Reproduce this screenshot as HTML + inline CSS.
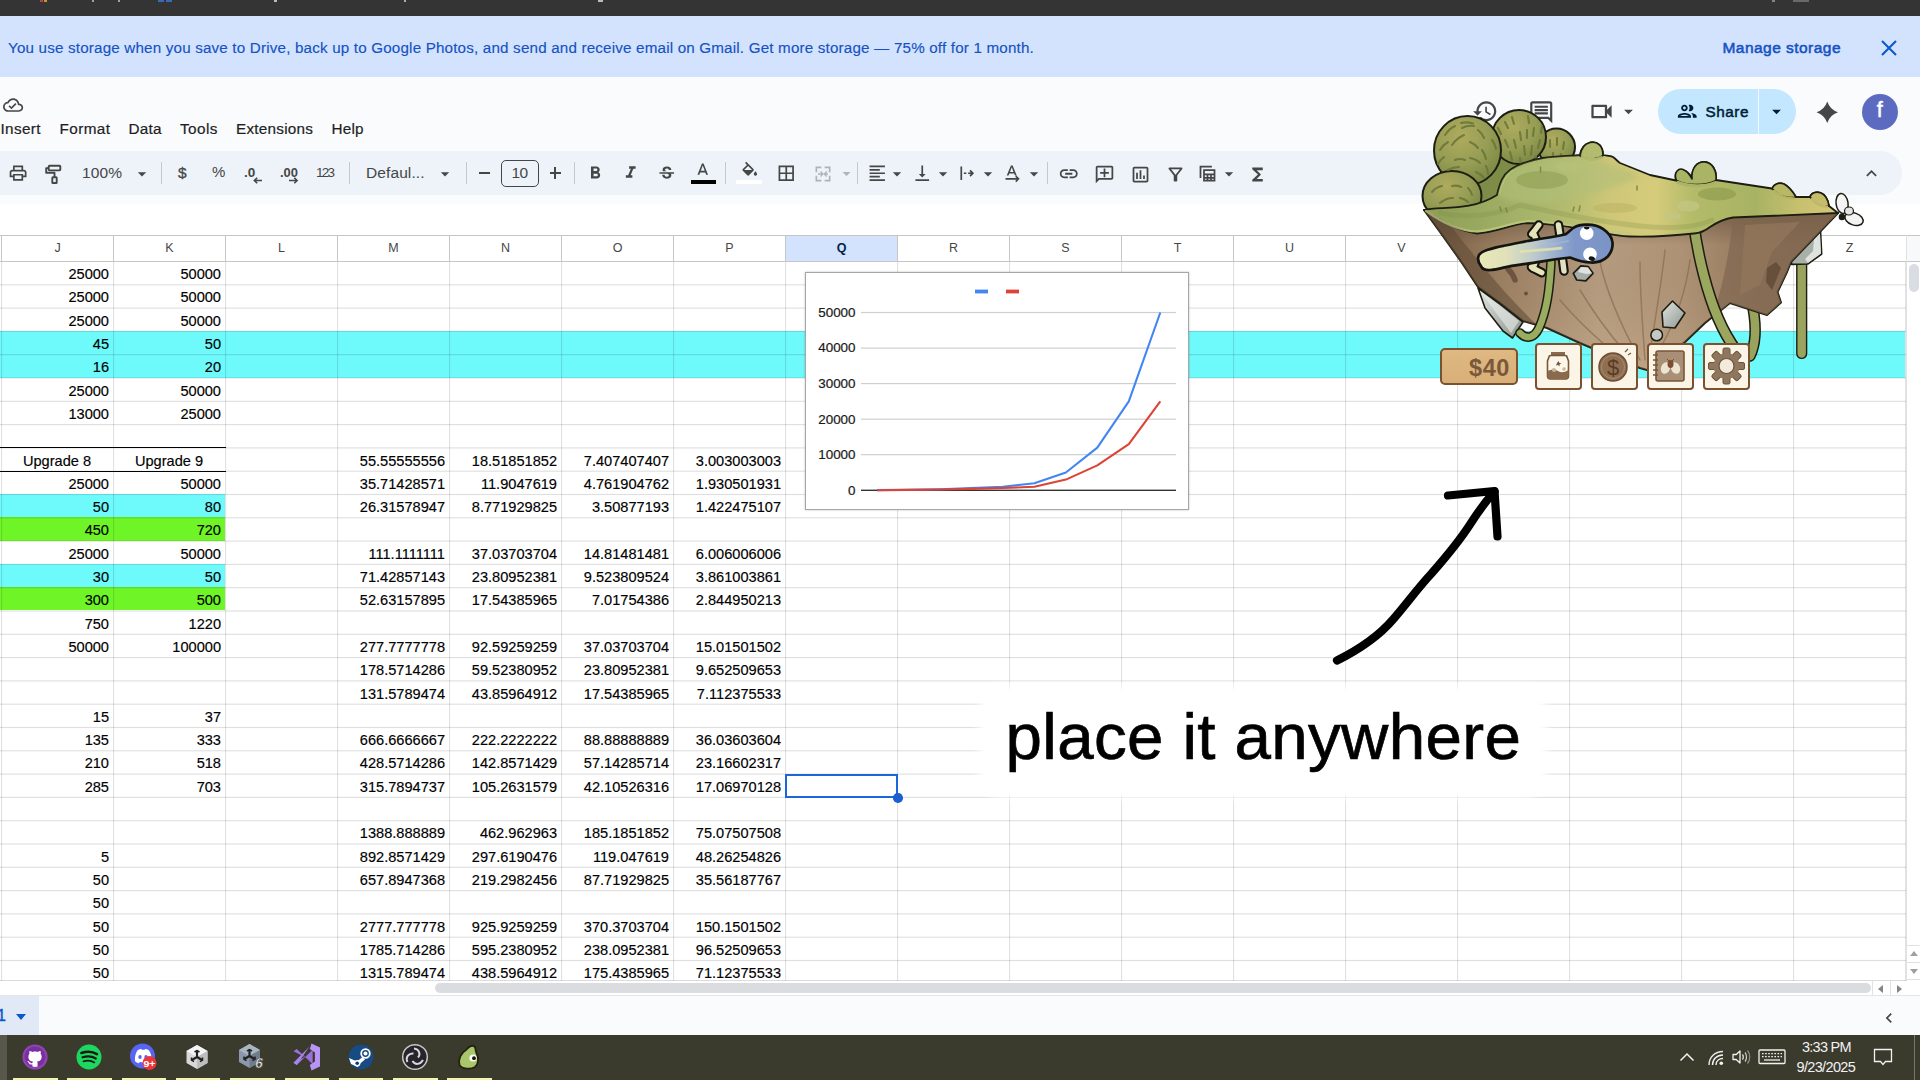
<!DOCTYPE html>
<html lang="en"><head><meta charset="utf-8"><title>Sheet</title>
<style>
*{box-sizing:border-box;margin:0;padding:0}
html,body{width:1920px;height:1080px;overflow:hidden;background:#fff}
body{font-family:"Liberation Sans",sans-serif;color:#000}
#root{position:relative;width:1920px;height:1080px;overflow:hidden;background:#fff}
#grid{position:absolute;left:0;top:0;width:1906px;height:981px;overflow:hidden}
.fl{position:absolute}
.hl{position:absolute;left:0;width:1906px;height:1px;background:rgba(0,0,0,.105)}
.vl{position:absolute;top:236px;height:745px;width:1px;background:rgba(0,0,0,.115);box-shadow:1px 0 0 rgba(0,0,0,.015)}
.hdr{position:absolute;left:0;top:235px;width:1906px;height:27px;background:#fff;border-top:1px solid #c4c7c5;border-bottom:1px solid #c4c7c5}
.hc{position:absolute;top:236px;height:25px;border-left:1px solid #c4c7c5;font-size:12.5px;color:#444746;text-align:center;line-height:25px}
.hc.sel{background:#d3e3fd;color:#041e49;font-weight:bold}
.c{position:absolute;height:24px;line-height:24px;font-size:14.600px;text-align:right;padding:0 4px 0 0;white-space:nowrap;-webkit-text-stroke:0.15px #000}
.c.ctr{text-align:center;padding:0}
.bl{position:absolute;height:1px;background:#000}
.selcell{position:absolute;border:2px solid #1b66dc;box-sizing:content-box;margin:-0px}
.selh{position:absolute;width:9.600px;height:9.600px;border-radius:50%;background:#1d5fd2}
#osbar{position:absolute;left:0;top:0;width:1920px;height:16px;background:#343434}
#banner{position:absolute;left:0;top:16px;width:1920px;height:61.500px;background:#d3e3fd;color:#0b57d0}
#apphead{position:absolute;left:0;top:77px;width:1920px;height:127px;background:#f9fbfd}
#toolbar{position:absolute;left:-30px;top:150.500px;width:1932px;height:44px;border-radius:22px;background:#eef2f9}
.t{position:absolute;white-space:nowrap;line-height:1}
.i{position:absolute;display:block;overflow:visible}
.sp{position:absolute;width:1px;background:#c7c7c7}
.mn{position:absolute;background:#444746}
.fsz{position:absolute;left:501px;top:159.500px;width:38px;height:27px;border:1.2px solid #444746;border-radius:5px}
#share{position:absolute;left:1658px;top:89px;width:138px;height:45px;border-radius:23px;background:#c2e7ff}
#share .sd{position:absolute;left:100px;top:0;width:1px;height:45px;background:rgba(255,255,255,.75)}
#avatar{position:absolute;left:1862px;top:93.500px;width:36px;height:36px;border-radius:50%;background:#5c6bc0}
#vsb{position:absolute;left:1906px;top:235px;width:14px;height:746px;background:#fff;border-left:1px solid #e1e1e1}
#vsb .th{position:absolute;left:2px;top:29px;width:9.500px;height:28px;border-radius:5px;background:#dadce3}
#vsb .ab{position:absolute;left:0;width:14px;height:18px;border-top:1px solid #e1e1e1;border-bottom:1px solid #e1e1e1}
#hsb{position:absolute;left:0;top:981px;width:1920px;height:14px;background:#fff}
#hsb .th{position:absolute;left:435px;top:2px;width:1436px;height:10px;border-radius:5px;background:#dadce0}
#hsb .vb{position:absolute;top:0;width:1px;height:14px;background:#e1e1e1}
#botbar{position:absolute;left:0;top:995px;width:1920px;height:40px;background:#f9fbfd;border-top:1px solid #e3e5e8}
#botbar .tab{position:absolute;left:0;top:0;width:39px;height:40px;background:#e1e9f7}
#taskbar{position:absolute;left:0;top:1035px;width:1920px;height:45px;background:#3a3a2d}
#taskbar .lstrip{position:absolute;left:0;top:0;width:7px;height:45px;background:#57574c}
#taskbar .rline{position:absolute;left:1914px;top:0;width:1px;height:45px;background:#77776a}
#taskbar .ul{position:absolute;top:42.500px;width:44.500px;height:3px;background:#f4f4ae}
#money{position:absolute;left:1440px;top:347.500px;width:78px;height:37.500px;background:linear-gradient(#dfb882,#d8af77);border:2.200px solid #7a5230;border-radius:5px}
#money span{position:absolute;right:6px;top:6px;font-size:23.500px;line-height:24px;font-weight:bold;color:#7a583b;letter-spacing:.6px}
.gb{position:absolute;top:343px;width:47px;height:46.500px;background:#fbf5e8;border:2.200px solid #7a5230;border-radius:4px;overflow:hidden}
.gb svg{position:absolute;left:-2.200px;top:-2.200px}
#chart{position:absolute;left:805px;top:272px;width:384px;height:238px;background:#fff;border:1px solid #a6a6a6;box-shadow:0 0 2px rgba(0,0,0,.25)}
#halo{position:absolute;left:990px;top:697px;width:546px;height:90px;background:#fff;border-radius:14px;box-shadow:0 0 10px 11px #fff}
#ptxt{position:absolute;left:1005.500px;top:704px;font-size:65.500px;line-height:1;letter-spacing:.35px;white-space:nowrap;color:#000;-webkit-text-stroke:.7px #000}

.speck{position:absolute;top:0;height:1.500px;display:block;opacity:.8}
#vsb .hcorner{position:absolute;left:0;top:0;width:14px;height:27px;background:#f8f9fa;border-top:1px solid #c4c7c5;border-bottom:1px solid #c4c7c5}

</style></head>
<body>
<div id="root">
<div id="osbar"><i class="speck" style="left:40px;width:3px;background:#d94a4a"></i><i class="speck" style="left:44px;width:3px;background:#e8b530"></i><i class="speck" style="left:92px;width:2px;background:#bbb"></i><i class="speck" style="left:118px;width:2px;background:#bbb"></i><i class="speck" style="left:158px;width:6px;background:#3b78d8"></i><i class="speck" style="left:166px;width:6px;background:#3b78d8"></i><i class="speck" style="left:274px;width:3px;background:#ddd"></i><i class="speck" style="left:404px;width:2px;background:#ccc"></i><i class="speck" style="left:598px;width:5px;background:#ddd"></i><i class="speck" style="left:1772px;width:3px;background:#999"></i><i class="speck" style="left:1793px;width:16px;background:#777"></i></div>
<div id="banner">
<span class="t" style="left:8.0px;top:23.9px;font-size:15.2px;letter-spacing:0.18px;color:#1552c4;-webkit-text-stroke:.15px #1552c4;">You use storage when you save to Drive, back up to Google Photos, and send and receive email on Gmail. Get more storage — 75% off for 1 month.</span>
<span class="t" style="left:1722.5px;top:23.7px;font-size:15.5px;letter-spacing:0.46px;color:#1552c4;-webkit-text-stroke:0.55px #1552c4;">Manage storage</span>
<svg class="i" style="left:1880px;top:22.500px" width="18" height="18" viewBox="0 0 18 18"><path d="M2 2 L16 16 M16 2 L2 16" stroke="#0b57d0" stroke-width="2.1" fill="none"/></svg>
</div>
<div id="apphead"></div>
<div id="toolbar"></div>
<svg class="i" style="left:2.9px;top:94.6px" width="20.2" height="20.2" viewBox="0 0 24 24"><path d="M19.350 10.040C18.670 6.590 15.640 4 12 4 9.110 4 6.600 5.640 5.350 8.040 2.340 8.360 0 10.910 0 14c0 3.310 2.690 6 6 6h13c2.760 0 5-2.240 5-5 0-2.640-2.050-4.780-4.650-4.960zM19 18H6c-2.210 0-4-1.790-4-4 0-2.050 1.530-3.760 3.560-3.970l1.070-.11.5-.95C8.080 7.140 9.940 6 12 6c2.620 0 4.880 1.860 5.390 4.430l.3 1.500 1.530.11c1.560.1 2.780 1.410 2.780 2.960 0 1.650-1.350 3-3 3zm-9-3.820l-2.090-2.090L6.500 13.500 10 17l6.010-6.010-1.410-1.410z" fill="#444746"/></svg>
<span class="t" style="left:0.5px;top:121.4px;font-size:15.3px;letter-spacing:0.35px;color:#1f1f1f;-webkit-text-stroke:.2px #1f1f1f;">Insert</span>
<span class="t" style="left:59.5px;top:121.4px;font-size:15.3px;letter-spacing:0.41px;color:#1f1f1f;-webkit-text-stroke:.2px #1f1f1f;">Format</span>
<span class="t" style="left:128.5px;top:121.4px;font-size:15.3px;letter-spacing:0.23px;color:#1f1f1f;-webkit-text-stroke:.2px #1f1f1f;">Data</span>
<span class="t" style="left:180.0px;top:121.4px;font-size:15.3px;letter-spacing:0.45px;color:#1f1f1f;-webkit-text-stroke:.2px #1f1f1f;">Tools</span>
<span class="t" style="left:236.0px;top:121.4px;font-size:15.3px;letter-spacing:0.24px;color:#1f1f1f;-webkit-text-stroke:.2px #1f1f1f;">Extensions</span>
<span class="t" style="left:331.5px;top:121.4px;font-size:15.3px;letter-spacing:0.18px;color:#1f1f1f;-webkit-text-stroke:.2px #1f1f1f;">Help</span>
<svg class="i" style="left:8.4px;top:163.4px" width="20.2" height="20.2" viewBox="0 0 24 24"><path d="M19 8h-1V3H6v5H5c-1.66 0-3 1.34-3 3v6h4v4h12v-4h4v-6c0-1.66-1.34-3-3-3zM8 5h8v3H8V5zm8 14H8v-4h8v4zm2-4v-2H6v2H4v-4c0-.55.45-1 1-1h14c.55 0 1 .45 1 1v4h-2z" fill="#444746"/></svg>
<svg class="i" style="left:40px;top:160px" width="28" height="28" viewBox="40 160 28 28"><g fill="none" stroke="#444746" stroke-width="1.900" stroke-linejoin="round"><rect x="48.700" y="165.800" width="11.600" height="4.600" rx="0.800"/><path d="M48.700 168.100h-2.500v4.700h8.300v4.500"/><rect x="52.300" y="177.300" width="4.400" height="5.700" rx="0.600"/></g></svg>
<span class="t" style="left:82.0px;top:165.2px;font-size:15.5px;letter-spacing:0.12px;color:#444746;">100%</span>
<svg class="i" style="left:131.7px;top:163.5px" width="20" height="20" viewBox="0 0 24 24"><path d="M7 10l5 5 5-5z" fill="#444746"/></svg>
<div class="sp" style="left:161px;top:162px;height:22px"></div>
<span class="t" style="left:178.0px;top:164.5px;font-size:15.5px;letter-spacing:0.38px;color:#444746;-webkit-text-stroke:0.3px #444746;">$</span>
<span class="t" style="left:212.0px;top:164.1px;font-size:15px;letter-spacing:-0.84px;color:#444746;">%</span>
<svg class="i" style="left:243px;top:163px" width="22" height="22" viewBox="0 0 22 22"><text x="1" y="14.2" font-family="Liberation Sans, sans-serif" font-size="13.5" font-weight="bold" fill="#444746">.0</text><path d="M19 17.500H11.500M14.200 14.700l-2.800 2.800 2.800 2.800" stroke="#444746" stroke-width="1.6" fill="none"/></svg>
<svg class="i" style="left:279px;top:163px" width="24" height="22" viewBox="0 0 24 22"><text x="1" y="14.200" font-family="Liberation Sans, sans-serif" font-size="13.5" font-weight="bold" fill="#444746" textLength="18" lengthAdjust="spacingAndGlyphs">.00</text><path d="M10 17.500H18M15.300 14.700l2.800 2.800-2.800 2.800" stroke="#444746" stroke-width="1.6" fill="none"/></svg>
<span class="t" style="left:316.0px;top:165.5px;font-size:13.5px;letter-spacing:-1.76px;color:#444746;">123</span>
<div class="sp" style="left:349px;top:162px;height:22px"></div>
<span class="t" style="left:366.0px;top:164.5px;font-size:15.5px;letter-spacing:0.10px;color:#444746;">Defaul...</span>
<svg class="i" style="left:434.7px;top:163.5px" width="20" height="20" viewBox="0 0 24 24"><path d="M7 10l5 5 5-5z" fill="#444746"/></svg>
<div class="sp" style="left:466px;top:162px;height:22px"></div>
<div class="mn" style="left:479px;top:172px;width:11px;height:2px"></div>
<div class="fsz"></div>
<span class="t" style="left:511.5px;top:164.7px;font-size:15.5px;letter-spacing:-0.74px;color:#444746;">10</span>
<div class="mn" style="left:549.500px;top:172px;width:11.5px;height:2px"></div><div class="mn" style="left:554.3px;top:167.200px;width:2px;height:11.5px"></div>
<div class="sp" style="left:574px;top:162px;height:22px"></div>
<svg class="i" style="left:585.2px;top:162.8px" width="20.5" height="20.5" viewBox="0 0 24 24"><path d="M15.6 10.79c.97-.67 1.65-1.77 1.65-2.79 0-2.26-1.75-4-4-4H7v14h7.04c2.09 0 3.71-1.7 3.71-3.79 0-1.52-.86-2.82-2.15-3.42zM10 6.5h3c.83 0 1.5.67 1.5 1.5s-.67 1.5-1.5 1.5h-3v-3zm3.5 9H10v-3h3.5c.83 0 1.5.67 1.5 1.5s-.67 1.5-1.5 1.5z" fill="#444746"/></svg>
<svg class="i" style="left:620.8px;top:163.2px" width="19.5" height="19.5" viewBox="0 0 24 24"><path d="M10 4v3h2.21l-3.42 8H6v3h8v-3h-2.21l3.42-8H18V4z" fill="#444746"/></svg>
<svg class="i" style="left:656.5px;top:163.8px" width="19.5" height="19.5" viewBox="0 0 24 24"><path d="M6.85 7.08C6.85 4.37 9.45 3 12.24 3c1.64 0 3 .49 3.9 1.28.77.65 1.46 1.73 1.46 3.24h-3.01c0-.31-.05-.59-.15-.85-.29-.86-1.2-1.28-2.25-1.28-1.86 0-2.34 1.02-2.34 1.7 0 .48.25.88.74 1.21.38.25.77.48 1.41.7H7.39c-.21-.34-.54-.89-.54-1.92zM21 12v-2H3v2h9.62c1.15.45 1.96.75 1.96 1.97 0 1-.81 1.67-2.28 1.67-1.54 0-2.93-.54-2.93-2.51H6.4c0 .55.08 1.13.24 1.58.81 2.29 3.29 3.3 5.67 3.3 2.27 0 5.3-.89 5.3-4.05 0-.3-.01-1.16-.48-1.94H21V12z" fill="#444746"/></svg>
<svg class="i" style="left:693.2px;top:160.8px" width="19.5" height="19.5" viewBox="0 0 24 24"><path d="M11 3L5.5 17h2.25l1.12-3h6.25l1.12 3h2.25L13 3h-2zm-1.38 9L12 5.67 14.38 12H9.62z" fill="#444746"/></svg>
<div class="mn" style="left:690.5px;top:179.5px;width:25.5px;height:4.500px;background:#000"></div>
<div class="sp" style="left:725px;top:162px;height:22px"></div>
<svg class="i" style="left:739.5px;top:160.8px" width="19.5" height="19.5" viewBox="0 -1 24 24"><path d="M16.56 8.94L7.62 0 6.21 1.41l2.38 2.38-5.15 5.15c-.59.59-.59 1.54 0 2.12l5.5 5.5c.29.29.68.44 1.06.44s.77-.15 1.06-.44l5.5-5.5c.59-.58.59-1.53 0-2.12zM5.21 10L10 5.21 14.79 10H5.21zM19 11.5s-2 2.17-2 3.5c0 1.1.9 2 2 2s2-.9 2-2c0-1.33-2-3.5-2-3.5z" fill="#444746"/></svg>
<div class="mn" style="left:736px;top:179.500px;width:26px;height:4.500px;background:#fff"></div>
<svg class="i" style="left:775.8px;top:163.2px" width="20.5" height="20.5" viewBox="0 0 24 24"><path d="M3 3v18h18V3H3zm8 16H5v-6h6v6zm0-8H5V5h6v6zm8 8h-6v-6h6v6zm0-8h-6V5h6v6z" fill="#444746"/></svg>
<svg class="i" style="left:812.7px;top:163.5px" width="20" height="20" viewBox="0 0 24 24"><path d="M3 3h7v2H5v5H3V3zm11 0h7v7h-2V5h-5V3zM3 14h2v5h5v2H3v-7zm16 0h2v7h-7v-2h5v-5zM6 11h4l-1.5-1.5 1-1L13 12l-3.500 3.500-1-1L10 13H6v-2zm12 0v2h-2.500l1.500 1.500-1 1L12.500 12 16 8.500l1 1L15.500 11H18z" fill="#b0b3b6"/></svg>
<svg class="i" style="left:836.7px;top:164.0px" width="19" height="19" viewBox="0 0 24 24"><path d="M7 10l5 5 5-5z" fill="#b0b3b6"/></svg>
<div class="sp" style="left:857px;top:162px;height:22px"></div>
<svg class="i" style="left:867.0px;top:163.2px" width="20.5" height="20.5" viewBox="0 0 24 24"><path d="M15 15H3v2h12v-2zm0-8H3v2h12V7zM3 13h18v-2H3v2zm0 8h18v-2H3v2zM3 3v2h18V3H3z" fill="#444746"/></svg>
<svg class="i" style="left:887.0px;top:163.5px" width="20" height="20" viewBox="0 0 24 24"><path d="M7 10l5 5 5-5z" fill="#444746"/></svg>
<svg class="i" style="left:912.2px;top:163.2px" width="20.5" height="20.5" viewBox="0 0 24 24"><path d="M16 13h-3V3h-2v10H8l4 4 4-4zM4 19v2h16v-2H4z" fill="#444746"/></svg>
<svg class="i" style="left:933.0px;top:163.5px" width="20" height="20" viewBox="0 0 24 24"><path d="M7 10l5 5 5-5z" fill="#444746"/></svg>
<svg class="i" style="left:956.8px;top:163.2px" width="20.5" height="20.5" viewBox="0 0 24 24"><path d="M4 4h2v16H4V4zm4 7h3v2H8v-2zm5 0h3.170l-1.590-1.590L16 8l4 4-4 4-1.410-1.410L16.170 13H13v-2z" fill="#444746"/></svg>
<svg class="i" style="left:978.0px;top:163.5px" width="20" height="20" viewBox="0 0 24 24"><path d="M7 10l5 5 5-5z" fill="#444746"/></svg>
<svg class="i" style="left:1003.0px;top:162.5px" width="20" height="20" viewBox="0 0 24 24"><path d="M9.500 3L4.500 15h2.100l1-2.500h5.800l1 2.500h2.100L11.500 3h-2zM8.350 10.700L10.500 5.200l2.150 5.500h-4.300zM3 18h13.200l-1.600-1.600L16 15l4 4-4 4-1.400-1.400 1.600-1.600H3v-2z" fill="#444746"/></svg>
<svg class="i" style="left:1023.7px;top:163.5px" width="20" height="20" viewBox="0 0 24 24"><path d="M7 10l5 5 5-5z" fill="#444746"/></svg>
<div class="sp" style="left:1047px;top:162px;height:22px"></div>
<svg class="i" style="left:1058.2px;top:163.2px" width="21.5" height="21.5" viewBox="0 0 24 24"><path d="M3.9 12c0-1.71 1.39-3.1 3.1-3.1h4V7H7c-2.76 0-5 2.24-5 5s2.24 5 5 5h4v-1.9H7c-1.71 0-3.1-1.39-3.1-3.1zM8 13h8v-2H8v2zm9-6h-4v1.9h4c1.71 0 3.1 1.39 3.1 3.1s-1.39 3.1-3.1 3.1h-4V17h4c2.76 0 5-2.24 5-5s-2.24-5-5-5z" fill="#444746"/></svg>
<svg class="i" style="left:1094.2px;top:163.5px" width="21" height="21" viewBox="0 0 24 24"><path d="M2 4c0-1.100.9-2 2-2h16c1.100 0 2 .9 2 2v12c0 1.100-.9 2-2 2H6l-4 4V4zm2 13.170L5.170 16H20V4H4v13.170zM11 5h2v4h4v2h-4v4h-2v-4H7V9h4z" fill="#444746"/></svg>
<svg class="i" style="left:1129.5px;top:163.5px" width="21" height="21" viewBox="0 0 24 24"><path d="M9 17H7v-7h2v7zm4 0h-2V7h2v10zm4 0h-2v-4h2v4zm2 2H5V5h14v14zm0-16H5c-1.100 0-2 .9-2 2v14c0 1.100.9 2 2 2h14c1.100 0 2-.9 2-2V5c0-1.100-.9-2-2-2z" fill="#444746"/></svg>
<svg class="i" style="left:1165.0px;top:163.5px" width="21" height="21" viewBox="0 0 24 24"><path d="M7 6h10l-5.010 6.300L7 6zm-2.750-.390C6.270 8.200 10 13 10 13v6c0 .55.45 1 1 1h2c.55 0 1-.45 1-1v-6s3.720-4.800 5.740-7.390c.51-.66.040-1.610-.79-1.610H5.040c-.83 0-1.300.95-.79 1.610z" fill="#444746"/></svg>
<svg class="i" style="left:1197.0px;top:163.0px" width="21" height="21" viewBox="0 0 24 24"><path d="M7 7h14v14H7V7zm2 2v3h10V9H9zm0 5v2h2v-2H9zm4 0v2h2v-2h-2zm4 0v2h2v-2h-2zm-8 4v1h2v-1H9zm4 0v1h2v-1h-2zm4 0v1h2v-1h-2zM3 3h14v2H5v12H3V3z" fill="#444746"/></svg>
<svg class="i" style="left:1219.0px;top:163.5px" width="20" height="20" viewBox="0 0 24 24"><path d="M7 10l5 5 5-5z" fill="#444746"/></svg>
<svg class="i" style="left:1247.0px;top:163.5px" width="21" height="21" viewBox="0 0 24 24"><path d="M18 4H6v2l6.500 6L6 18v2h12v-3h-7l5-5-5-5h7z" fill="#444746"/></svg>
<svg class="i" style="left:1860.5px;top:162.5px" width="21" height="21" viewBox="0 0 24 24"><path d="M7.410 15.410L12 10.830l4.590 4.580L18 14l-6-6-6 6z" fill="#444746"/></svg>
<svg class="i" style="left:1472.2px;top:97.8px" width="26.5" height="26.5" viewBox="0 0 24 24"><path d="M13 3c-4.970 0-9 4.030-9 9H1l3.890 3.890.07.14L9 12H6c0-3.870 3.130-7 7-7s7 3.130 7 7-3.130 7-7 7c-1.930 0-3.680-.79-4.940-2.060l-1.420 1.420C8.270 19.990 10.510 21 13 21c4.970 0 9-4.030 9-9s-4.030-9-9-9zm-1 5v5l4.280 2.540.72-1.210-3.500-2.080V8H12z" fill="#444746"/></svg>
<svg class="i" style="left:1527.8px;top:98.8px" width="26.5" height="26.5" viewBox="0 0 24 24"><path d="M21.990 4c0-1.100-.89-2-1.990-2H4c-1.100 0-2 .9-2 2v12c0 1.100.9 2 2 2h14l4 4-.01-18zM20 4v13.170L18.830 16H4V4h16zM6 12h12v2H6zm0-3h12v2H6zm0-3h12v2H6z" fill="#444746"/></svg>
<svg class="i" style="left:1588.0px;top:98.0px" width="27" height="27" viewBox="0 0 24 24"><path d="M15 8v8H5V8h10m1-2H4c-.55 0-1 .45-1 1v10c0 .55.45 1 1 1h12c.55 0 1-.45 1-1v-3.500l4 4v-11l-4 4V7c0-.55-.45-1-1-1z" fill="#444746"/></svg>
<svg class="i" style="left:1617.5px;top:101.0px" width="21" height="21" viewBox="0 0 24 24"><path d="M7 10l5 5 5-5z" fill="#444746"/></svg>
<div id="share"><div class="sd"></div></div>
<svg class="i" style="left:1676.2px;top:100.0px" width="22.5" height="22.5" viewBox="0 0 24 24"><path d="M9 13.750c-2.340 0-7 1.170-7 3.500V19h14v-1.750c0-2.330-4.660-3.500-7-3.500zM4.340 17c.840-.580 2.870-1.250 4.660-1.250s3.820.670 4.660 1.250H4.340zM9 12c1.930 0 3.500-1.570 3.500-3.500S10.930 5 9 5 5.500 6.570 5.500 8.500 7.070 12 9 12zm0-5c.830 0 1.500.670 1.500 1.500S9.830 10 9 10s-1.500-.670-1.500-1.500S8.170 7 9 7zm7.040 6.810c1.160.840 1.960 1.960 1.960 3.440V19h4v-1.750c0-2.020-3.500-3.170-5.960-3.440zM15 12c1.930 0 3.500-1.570 3.500-3.500S16.930 5 15 5c-.540 0-1.040.130-1.500.350.630.890 1 1.980 1 3.150s-.370 2.260-1 3.150c.460.220.960.350 1.500.350z" fill="#001d35"/></svg>
<span class="t" style="left:1705.5px;top:103.6px;font-size:15.3px;letter-spacing:0.54px;color:#001d35;-webkit-text-stroke:0.5px #001d35;">Share</span>
<svg class="i" style="left:1766.0px;top:101.0px" width="21" height="21" viewBox="0 0 24 24"><path d="M7 10l5 5 5-5z" fill="#001d35"/></svg>
<svg class="i" style="left:1814.8px;top:99.5px" width="24.5" height="24.5" viewBox="0 0 24 24"><path d="M12 1.500Q14.600 9.400 22.500 12Q14.600 14.600 12 22.500Q9.400 14.600 1.500 12Q9.400 9.400 12 1.500z" fill="#444746"/></svg>
<div id="avatar"></div>
<span class="t" style="left:1876.8px;top:99.8px;font-size:21.5px;letter-spacing:0.63px;color:#fff;-webkit-text-stroke:0.5px #fff;">f</span>
<div id="grid">
<div class="fl" style="left:0px;top:331px;width:1905px;height:47px;background:#6ef9fb"></div>
<div class="fl" style="left:0px;top:494px;width:225px;height:23px;background:#6ef9fb"></div>
<div class="fl" style="left:0px;top:517px;width:225px;height:24px;background:#6ff527"></div>
<div class="fl" style="left:0px;top:564px;width:225px;height:23px;background:#6ef9fb"></div>
<div class="fl" style="left:0px;top:587px;width:225px;height:23px;background:#6ff527"></div>
<div class="hl" style="top:284px;background:rgba(0,0,0,0.095)"></div>
<div class="hl" style="top:285px;background:rgba(0,0,0,0.045)"></div>
<div class="hl" style="top:307px;background:rgba(0,0,0,0.057)"></div>
<div class="hl" style="top:308px;background:rgba(0,0,0,0.083)"></div>
<div class="hl" style="top:330px;background:rgba(0,0,0,0.020)"></div>
<div class="hl" style="top:331px;background:rgba(0,0,0,0.120)"></div>
<div class="hl" style="top:354px;background:rgba(0,0,0,0.108)"></div>
<div class="hl" style="top:355px;background:rgba(0,0,0,0.032)"></div>
<div class="hl" style="top:377px;background:rgba(0,0,0,0.070)"></div>
<div class="hl" style="top:378px;background:rgba(0,0,0,0.070)"></div>
<div class="hl" style="top:400px;background:rgba(0,0,0,0.032)"></div>
<div class="hl" style="top:401px;background:rgba(0,0,0,0.108)"></div>
<div class="hl" style="top:424px;background:rgba(0,0,0,0.120)"></div>
<div class="hl" style="top:425px;background:rgba(0,0,0,0.020)"></div>
<div class="hl" style="top:447px;background:rgba(0,0,0,0.082)"></div>
<div class="hl" style="top:448px;background:rgba(0,0,0,0.058)"></div>
<div class="hl" style="top:470px;background:rgba(0,0,0,0.045)"></div>
<div class="hl" style="top:471px;background:rgba(0,0,0,0.095)"></div>
<div class="hl" style="top:493px;background:rgba(0,0,0,0.008)"></div>
<div class="hl" style="top:494px;background:rgba(0,0,0,0.125)"></div>
<div class="hl" style="top:495px;background:rgba(0,0,0,0.008)"></div>
<div class="hl" style="top:517px;background:rgba(0,0,0,0.095)"></div>
<div class="hl" style="top:518px;background:rgba(0,0,0,0.045)"></div>
<div class="hl" style="top:540px;background:rgba(0,0,0,0.058)"></div>
<div class="hl" style="top:541px;background:rgba(0,0,0,0.082)"></div>
<div class="hl" style="top:563px;background:rgba(0,0,0,0.020)"></div>
<div class="hl" style="top:564px;background:rgba(0,0,0,0.120)"></div>
<div class="hl" style="top:587px;background:rgba(0,0,0,0.108)"></div>
<div class="hl" style="top:588px;background:rgba(0,0,0,0.032)"></div>
<div class="hl" style="top:610px;background:rgba(0,0,0,0.070)"></div>
<div class="hl" style="top:611px;background:rgba(0,0,0,0.070)"></div>
<div class="hl" style="top:633px;background:rgba(0,0,0,0.032)"></div>
<div class="hl" style="top:634px;background:rgba(0,0,0,0.108)"></div>
<div class="hl" style="top:657px;background:rgba(0,0,0,0.120)"></div>
<div class="hl" style="top:658px;background:rgba(0,0,0,0.020)"></div>
<div class="hl" style="top:680px;background:rgba(0,0,0,0.082)"></div>
<div class="hl" style="top:681px;background:rgba(0,0,0,0.058)"></div>
<div class="hl" style="top:703px;background:rgba(0,0,0,0.045)"></div>
<div class="hl" style="top:704px;background:rgba(0,0,0,0.095)"></div>
<div class="hl" style="top:726px;background:rgba(0,0,0,0.007)"></div>
<div class="hl" style="top:727px;background:rgba(0,0,0,0.125)"></div>
<div class="hl" style="top:728px;background:rgba(0,0,0,0.008)"></div>
<div class="hl" style="top:750px;background:rgba(0,0,0,0.095)"></div>
<div class="hl" style="top:751px;background:rgba(0,0,0,0.045)"></div>
<div class="hl" style="top:773px;background:rgba(0,0,0,0.058)"></div>
<div class="hl" style="top:774px;background:rgba(0,0,0,0.082)"></div>
<div class="hl" style="top:796px;background:rgba(0,0,0,0.020)"></div>
<div class="hl" style="top:797px;background:rgba(0,0,0,0.120)"></div>
<div class="hl" style="top:820px;background:rgba(0,0,0,0.107)"></div>
<div class="hl" style="top:821px;background:rgba(0,0,0,0.033)"></div>
<div class="hl" style="top:843px;background:rgba(0,0,0,0.070)"></div>
<div class="hl" style="top:844px;background:rgba(0,0,0,0.070)"></div>
<div class="hl" style="top:866px;background:rgba(0,0,0,0.032)"></div>
<div class="hl" style="top:867px;background:rgba(0,0,0,0.108)"></div>
<div class="hl" style="top:890px;background:rgba(0,0,0,0.120)"></div>
<div class="hl" style="top:891px;background:rgba(0,0,0,0.020)"></div>
<div class="hl" style="top:913px;background:rgba(0,0,0,0.083)"></div>
<div class="hl" style="top:914px;background:rgba(0,0,0,0.057)"></div>
<div class="hl" style="top:936px;background:rgba(0,0,0,0.045)"></div>
<div class="hl" style="top:937px;background:rgba(0,0,0,0.095)"></div>
<div class="hl" style="top:959px;background:rgba(0,0,0,0.007)"></div>
<div class="hl" style="top:960px;background:rgba(0,0,0,0.125)"></div>
<div class="hl" style="top:961px;background:rgba(0,0,0,0.008)"></div>
<div class="vl" style="left:1px"></div>
<div class="vl" style="left:113px"></div>
<div class="vl" style="left:225px"></div>
<div class="vl" style="left:337px"></div>
<div class="vl" style="left:449px"></div>
<div class="vl" style="left:561px"></div>
<div class="vl" style="left:673px"></div>
<div class="vl" style="left:785px"></div>
<div class="vl" style="left:897px"></div>
<div class="vl" style="left:1009px"></div>
<div class="vl" style="left:1121px"></div>
<div class="vl" style="left:1233px"></div>
<div class="vl" style="left:1345px"></div>
<div class="vl" style="left:1457px"></div>
<div class="vl" style="left:1569px"></div>
<div class="vl" style="left:1681px"></div>
<div class="vl" style="left:1793px"></div>
<div class="vl" style="left:1905px"></div>
<div class="hl" style="top:980px;background:rgba(0,0,0,.14)"></div>
<div class="hdr"></div>
<div class="hc" style="left:1px;width:112px"><span>J</span></div>
<div class="hc" style="left:113px;width:112px"><span>K</span></div>
<div class="hc" style="left:225px;width:112px"><span>L</span></div>
<div class="hc" style="left:337px;width:112px"><span>M</span></div>
<div class="hc" style="left:449px;width:112px"><span>N</span></div>
<div class="hc" style="left:561px;width:112px"><span>O</span></div>
<div class="hc" style="left:673px;width:112px"><span>P</span></div>
<div class="hc sel" style="left:785px;width:112px"><span>Q</span></div>
<div class="hc" style="left:897px;width:112px"><span>R</span></div>
<div class="hc" style="left:1009px;width:112px"><span>S</span></div>
<div class="hc" style="left:1121px;width:112px"><span>T</span></div>
<div class="hc" style="left:1233px;width:112px"><span>U</span></div>
<div class="hc" style="left:1345px;width:112px"><span>V</span></div>
<div class="hc" style="left:1457px;width:112px"><span>W</span></div>
<div class="hc" style="left:1569px;width:112px"><span>X</span></div>
<div class="hc" style="left:1681px;width:112px"><span>Y</span></div>
<div class="hc" style="left:1793px;width:112px"><span>Z</span></div>
<div class="c" style="left:1px;top:261px;width:112px;transform:translateY(0.92px) scaleY(1.05)">25000</div>
<div class="c" style="left:113px;top:261px;width:112px;transform:translateY(0.92px) scaleY(1.05)">50000</div>
<div class="c" style="left:1px;top:284px;width:112px;transform:translateY(1.22px) scaleY(1.05)">25000</div>
<div class="c" style="left:113px;top:284px;width:112px;transform:translateY(1.22px) scaleY(1.05)">50000</div>
<div class="c" style="left:1px;top:308px;width:112px;transform:translateY(0.52px) scaleY(1.05)">25000</div>
<div class="c" style="left:113px;top:308px;width:112px;transform:translateY(0.52px) scaleY(1.05)">50000</div>
<div class="c" style="left:1px;top:331px;width:112px;transform:translateY(0.82px) scaleY(1.05)">45</div>
<div class="c" style="left:113px;top:331px;width:112px;transform:translateY(0.82px) scaleY(1.05)">50</div>
<div class="c" style="left:1px;top:354px;width:112px;transform:translateY(1.12px) scaleY(1.05)">16</div>
<div class="c" style="left:113px;top:354px;width:112px;transform:translateY(1.12px) scaleY(1.05)">20</div>
<div class="c" style="left:1px;top:378px;width:112px;transform:translateY(0.42px) scaleY(1.05)">25000</div>
<div class="c" style="left:113px;top:378px;width:112px;transform:translateY(0.42px) scaleY(1.05)">50000</div>
<div class="c" style="left:1px;top:401px;width:112px;transform:translateY(0.72px) scaleY(1.05)">13000</div>
<div class="c" style="left:113px;top:401px;width:112px;transform:translateY(0.72px) scaleY(1.05)">25000</div>
<div class="c ctr" style="left:1px;top:447px;width:112px;transform:translateY(1.32px) scaleY(1.05)">Upgrade 8</div>
<div class="c ctr" style="left:113px;top:447px;width:112px;transform:translateY(1.32px) scaleY(1.05)">Upgrade 9</div>
<div class="c" style="left:337px;top:447px;width:112px;transform:translateY(1.32px) scaleY(1.05)">55.55555556</div>
<div class="c" style="left:449px;top:447px;width:112px;transform:translateY(1.32px) scaleY(1.05)">18.51851852</div>
<div class="c" style="left:561px;top:447px;width:112px;transform:translateY(1.32px) scaleY(1.05)">7.407407407</div>
<div class="c" style="left:673px;top:447px;width:112px;transform:translateY(1.32px) scaleY(1.05)">3.003003003</div>
<div class="c" style="left:1px;top:471px;width:112px;transform:translateY(0.62px) scaleY(1.05)">25000</div>
<div class="c" style="left:113px;top:471px;width:112px;transform:translateY(0.62px) scaleY(1.05)">50000</div>
<div class="c" style="left:337px;top:471px;width:112px;transform:translateY(0.62px) scaleY(1.05)">35.71428571</div>
<div class="c" style="left:449px;top:471px;width:112px;transform:translateY(0.62px) scaleY(1.05)">11.9047619</div>
<div class="c" style="left:561px;top:471px;width:112px;transform:translateY(0.62px) scaleY(1.05)">4.761904762</div>
<div class="c" style="left:673px;top:471px;width:112px;transform:translateY(0.62px) scaleY(1.05)">1.930501931</div>
<div class="c" style="left:1px;top:494px;width:112px;transform:translateY(0.92px) scaleY(1.05)">50</div>
<div class="c" style="left:113px;top:494px;width:112px;transform:translateY(0.92px) scaleY(1.05)">80</div>
<div class="c" style="left:337px;top:494px;width:112px;transform:translateY(0.92px) scaleY(1.05)">26.31578947</div>
<div class="c" style="left:449px;top:494px;width:112px;transform:translateY(0.92px) scaleY(1.05)">8.771929825</div>
<div class="c" style="left:561px;top:494px;width:112px;transform:translateY(0.92px) scaleY(1.05)">3.50877193</div>
<div class="c" style="left:673px;top:494px;width:112px;transform:translateY(0.92px) scaleY(1.05)">1.422475107</div>
<div class="c" style="left:1px;top:517px;width:112px;transform:translateY(1.22px) scaleY(1.05)">450</div>
<div class="c" style="left:113px;top:517px;width:112px;transform:translateY(1.22px) scaleY(1.05)">720</div>
<div class="c" style="left:1px;top:541px;width:112px;transform:translateY(0.52px) scaleY(1.05)">25000</div>
<div class="c" style="left:113px;top:541px;width:112px;transform:translateY(0.52px) scaleY(1.05)">50000</div>
<div class="c" style="left:337px;top:541px;width:112px;transform:translateY(0.52px) scaleY(1.05)">111.1111111</div>
<div class="c" style="left:449px;top:541px;width:112px;transform:translateY(0.52px) scaleY(1.05)">37.03703704</div>
<div class="c" style="left:561px;top:541px;width:112px;transform:translateY(0.52px) scaleY(1.05)">14.81481481</div>
<div class="c" style="left:673px;top:541px;width:112px;transform:translateY(0.52px) scaleY(1.05)">6.006006006</div>
<div class="c" style="left:1px;top:564px;width:112px;transform:translateY(0.82px) scaleY(1.05)">30</div>
<div class="c" style="left:113px;top:564px;width:112px;transform:translateY(0.82px) scaleY(1.05)">50</div>
<div class="c" style="left:337px;top:564px;width:112px;transform:translateY(0.82px) scaleY(1.05)">71.42857143</div>
<div class="c" style="left:449px;top:564px;width:112px;transform:translateY(0.82px) scaleY(1.05)">23.80952381</div>
<div class="c" style="left:561px;top:564px;width:112px;transform:translateY(0.82px) scaleY(1.05)">9.523809524</div>
<div class="c" style="left:673px;top:564px;width:112px;transform:translateY(0.82px) scaleY(1.05)">3.861003861</div>
<div class="c" style="left:1px;top:587px;width:112px;transform:translateY(1.12px) scaleY(1.05)">300</div>
<div class="c" style="left:113px;top:587px;width:112px;transform:translateY(1.12px) scaleY(1.05)">500</div>
<div class="c" style="left:337px;top:587px;width:112px;transform:translateY(1.12px) scaleY(1.05)">52.63157895</div>
<div class="c" style="left:449px;top:587px;width:112px;transform:translateY(1.12px) scaleY(1.05)">17.54385965</div>
<div class="c" style="left:561px;top:587px;width:112px;transform:translateY(1.12px) scaleY(1.05)">7.01754386</div>
<div class="c" style="left:673px;top:587px;width:112px;transform:translateY(1.12px) scaleY(1.05)">2.844950213</div>
<div class="c" style="left:1px;top:611px;width:112px;transform:translateY(0.42px) scaleY(1.05)">750</div>
<div class="c" style="left:113px;top:611px;width:112px;transform:translateY(0.42px) scaleY(1.05)">1220</div>
<div class="c" style="left:1px;top:634px;width:112px;transform:translateY(0.72px) scaleY(1.05)">50000</div>
<div class="c" style="left:113px;top:634px;width:112px;transform:translateY(0.72px) scaleY(1.05)">100000</div>
<div class="c" style="left:337px;top:634px;width:112px;transform:translateY(0.72px) scaleY(1.05)">277.7777778</div>
<div class="c" style="left:449px;top:634px;width:112px;transform:translateY(0.72px) scaleY(1.05)">92.59259259</div>
<div class="c" style="left:561px;top:634px;width:112px;transform:translateY(0.72px) scaleY(1.05)">37.03703704</div>
<div class="c" style="left:673px;top:634px;width:112px;transform:translateY(0.72px) scaleY(1.05)">15.01501502</div>
<div class="c" style="left:337px;top:657px;width:112px;transform:translateY(1.02px) scaleY(1.05)">178.5714286</div>
<div class="c" style="left:449px;top:657px;width:112px;transform:translateY(1.02px) scaleY(1.05)">59.52380952</div>
<div class="c" style="left:561px;top:657px;width:112px;transform:translateY(1.02px) scaleY(1.05)">23.80952381</div>
<div class="c" style="left:673px;top:657px;width:112px;transform:translateY(1.02px) scaleY(1.05)">9.652509653</div>
<div class="c" style="left:337px;top:680px;width:112px;transform:translateY(1.32px) scaleY(1.05)">131.5789474</div>
<div class="c" style="left:449px;top:680px;width:112px;transform:translateY(1.32px) scaleY(1.05)">43.85964912</div>
<div class="c" style="left:561px;top:680px;width:112px;transform:translateY(1.32px) scaleY(1.05)">17.54385965</div>
<div class="c" style="left:673px;top:680px;width:112px;transform:translateY(1.32px) scaleY(1.05)">7.112375533</div>
<div class="c" style="left:1px;top:704px;width:112px;transform:translateY(0.62px) scaleY(1.05)">15</div>
<div class="c" style="left:113px;top:704px;width:112px;transform:translateY(0.62px) scaleY(1.05)">37</div>
<div class="c" style="left:1px;top:727px;width:112px;transform:translateY(0.92px) scaleY(1.05)">135</div>
<div class="c" style="left:113px;top:727px;width:112px;transform:translateY(0.92px) scaleY(1.05)">333</div>
<div class="c" style="left:337px;top:727px;width:112px;transform:translateY(0.92px) scaleY(1.05)">666.6666667</div>
<div class="c" style="left:449px;top:727px;width:112px;transform:translateY(0.92px) scaleY(1.05)">222.2222222</div>
<div class="c" style="left:561px;top:727px;width:112px;transform:translateY(0.92px) scaleY(1.05)">88.88888889</div>
<div class="c" style="left:673px;top:727px;width:112px;transform:translateY(0.92px) scaleY(1.05)">36.03603604</div>
<div class="c" style="left:1px;top:750px;width:112px;transform:translateY(1.22px) scaleY(1.05)">210</div>
<div class="c" style="left:113px;top:750px;width:112px;transform:translateY(1.22px) scaleY(1.05)">518</div>
<div class="c" style="left:337px;top:750px;width:112px;transform:translateY(1.22px) scaleY(1.05)">428.5714286</div>
<div class="c" style="left:449px;top:750px;width:112px;transform:translateY(1.22px) scaleY(1.05)">142.8571429</div>
<div class="c" style="left:561px;top:750px;width:112px;transform:translateY(1.22px) scaleY(1.05)">57.14285714</div>
<div class="c" style="left:673px;top:750px;width:112px;transform:translateY(1.22px) scaleY(1.05)">23.16602317</div>
<div class="c" style="left:1px;top:774px;width:112px;transform:translateY(0.52px) scaleY(1.05)">285</div>
<div class="c" style="left:113px;top:774px;width:112px;transform:translateY(0.52px) scaleY(1.05)">703</div>
<div class="c" style="left:337px;top:774px;width:112px;transform:translateY(0.52px) scaleY(1.05)">315.7894737</div>
<div class="c" style="left:449px;top:774px;width:112px;transform:translateY(0.52px) scaleY(1.05)">105.2631579</div>
<div class="c" style="left:561px;top:774px;width:112px;transform:translateY(0.52px) scaleY(1.05)">42.10526316</div>
<div class="c" style="left:673px;top:774px;width:112px;transform:translateY(0.52px) scaleY(1.05)">17.06970128</div>
<div class="c" style="left:337px;top:820px;width:112px;transform:translateY(1.12px) scaleY(1.05)">1388.888889</div>
<div class="c" style="left:449px;top:820px;width:112px;transform:translateY(1.12px) scaleY(1.05)">462.962963</div>
<div class="c" style="left:561px;top:820px;width:112px;transform:translateY(1.12px) scaleY(1.05)">185.1851852</div>
<div class="c" style="left:673px;top:820px;width:112px;transform:translateY(1.12px) scaleY(1.05)">75.07507508</div>
<div class="c" style="left:1px;top:844px;width:112px;transform:translateY(0.42px) scaleY(1.05)">5</div>
<div class="c" style="left:337px;top:844px;width:112px;transform:translateY(0.42px) scaleY(1.05)">892.8571429</div>
<div class="c" style="left:449px;top:844px;width:112px;transform:translateY(0.42px) scaleY(1.05)">297.6190476</div>
<div class="c" style="left:561px;top:844px;width:112px;transform:translateY(0.42px) scaleY(1.05)">119.047619</div>
<div class="c" style="left:673px;top:844px;width:112px;transform:translateY(0.42px) scaleY(1.05)">48.26254826</div>
<div class="c" style="left:1px;top:867px;width:112px;transform:translateY(0.72px) scaleY(1.05)">50</div>
<div class="c" style="left:337px;top:867px;width:112px;transform:translateY(0.72px) scaleY(1.05)">657.8947368</div>
<div class="c" style="left:449px;top:867px;width:112px;transform:translateY(0.72px) scaleY(1.05)">219.2982456</div>
<div class="c" style="left:561px;top:867px;width:112px;transform:translateY(0.72px) scaleY(1.05)">87.71929825</div>
<div class="c" style="left:673px;top:867px;width:112px;transform:translateY(0.72px) scaleY(1.05)">35.56187767</div>
<div class="c" style="left:1px;top:890px;width:112px;transform:translateY(1.02px) scaleY(1.05)">50</div>
<div class="c" style="left:1px;top:913px;width:112px;transform:translateY(1.32px) scaleY(1.05)">50</div>
<div class="c" style="left:337px;top:913px;width:112px;transform:translateY(1.32px) scaleY(1.05)">2777.777778</div>
<div class="c" style="left:449px;top:913px;width:112px;transform:translateY(1.32px) scaleY(1.05)">925.9259259</div>
<div class="c" style="left:561px;top:913px;width:112px;transform:translateY(1.32px) scaleY(1.05)">370.3703704</div>
<div class="c" style="left:673px;top:913px;width:112px;transform:translateY(1.32px) scaleY(1.05)">150.1501502</div>
<div class="c" style="left:1px;top:937px;width:112px;transform:translateY(0.62px) scaleY(1.05)">50</div>
<div class="c" style="left:337px;top:937px;width:112px;transform:translateY(0.62px) scaleY(1.05)">1785.714286</div>
<div class="c" style="left:449px;top:937px;width:112px;transform:translateY(0.62px) scaleY(1.05)">595.2380952</div>
<div class="c" style="left:561px;top:937px;width:112px;transform:translateY(0.62px) scaleY(1.05)">238.0952381</div>
<div class="c" style="left:673px;top:937px;width:112px;transform:translateY(0.62px) scaleY(1.05)">96.52509653</div>
<div class="c" style="left:1px;top:960px;width:112px;transform:translateY(0.92px) scaleY(1.05)">50</div>
<div class="c" style="left:337px;top:960px;width:112px;transform:translateY(0.92px) scaleY(1.05)">1315.789474</div>
<div class="c" style="left:449px;top:960px;width:112px;transform:translateY(0.92px) scaleY(1.05)">438.5964912</div>
<div class="c" style="left:561px;top:960px;width:112px;transform:translateY(0.92px) scaleY(1.05)">175.4385965</div>
<div class="c" style="left:673px;top:960px;width:112px;transform:translateY(0.92px) scaleY(1.05)">71.12375533</div>
<div class="bl" style="left:0;top:447px;width:226px"></div>
<div class="bl" style="left:0;top:471px;width:226px"></div>
<div class="selcell" style="left:785px;top:774px;width:109px;height:20px"></div>
<div class="selh" style="left:893.4px;top:793.2px"></div>
</div>
<div id="chart"></div>
<svg id="chartsvg" style="position:absolute;left:800px;top:265px" width="400" height="255" viewBox="800 265 400 255">
<rect x="861" y="454.1" width="315" height="1.200" fill="#cfcfcf"/>
<rect x="861" y="418.6" width="315" height="1.200" fill="#cfcfcf"/>
<rect x="861" y="383.0" width="315" height="1.200" fill="#cfcfcf"/>
<rect x="861" y="347.5" width="315" height="1.200" fill="#cfcfcf"/>
<rect x="861" y="311.9" width="315" height="1.200" fill="#cfcfcf"/>
<rect x="861" y="489.6" width="315" height="1.400" fill="#333"/>
<text x="855.500" y="494.6" text-anchor="end" font-family="Liberation Sans, sans-serif" font-size="13.400" fill="#1a1a1a" stroke="#1a1a1a" stroke-width=".2">0</text>
<text x="855.500" y="459.0" text-anchor="end" font-family="Liberation Sans, sans-serif" font-size="13.400" fill="#1a1a1a" stroke="#1a1a1a" stroke-width=".2">10000</text>
<text x="855.500" y="423.5" text-anchor="end" font-family="Liberation Sans, sans-serif" font-size="13.400" fill="#1a1a1a" stroke="#1a1a1a" stroke-width=".2">20000</text>
<text x="855.500" y="387.9" text-anchor="end" font-family="Liberation Sans, sans-serif" font-size="13.400" fill="#1a1a1a" stroke="#1a1a1a" stroke-width=".2">30000</text>
<text x="855.500" y="352.4" text-anchor="end" font-family="Liberation Sans, sans-serif" font-size="13.400" fill="#1a1a1a" stroke="#1a1a1a" stroke-width=".2">40000</text>
<text x="855.500" y="316.8" text-anchor="end" font-family="Liberation Sans, sans-serif" font-size="13.400" fill="#1a1a1a" stroke="#1a1a1a" stroke-width=".2">50000</text>
<rect x="975" y="289.600" width="13" height="3.800" fill="#4285f4"/><rect x="1006" y="289.600" width="13" height="3.800" fill="#db4437"/>
<polyline points="877.0,490.1 908.5,489.8 940.0,489.2 971.4,488.1 1002.9,486.7 1034.4,483.2 1065.9,472.5 1097.3,447.6 1128.8,401.4 1160.3,312.5" fill="none" stroke="#4285f4" stroke-width="2.100" stroke-linejoin="round"/>
<polyline points="877.0,490.2 908.5,489.9 940.0,489.5 971.4,488.9 1002.9,488.0 1034.4,486.7 1065.9,479.6 1097.3,465.4 1128.8,444.1 1160.3,401.4" fill="none" stroke="#db4437" stroke-width="2.100" stroke-linejoin="round"/>
</svg>
<div id="halo"></div>
<div id="ptxt">place it anywhere</div>
<svg id="arrow" style="position:absolute;left:1320px;top:470px" width="200" height="210" viewBox="1320 470 200 210">
<g fill="none" stroke="#000" stroke-width="8.200" stroke-linecap="round" stroke-linejoin="round">
<path d="M1337 660.500 C1360 649 1378 637 1393 619.500 C1408 602 1418 588 1431.500 573.500 C1446 557 1458 543 1470 524.500 C1478 512 1486 501 1494.500 491.500"/>
<path d="M1448 495.500 L1494.500 491 L1497.500 536.500"/>
</g></svg>

<svg id="island" style="position:absolute;left:1400px;top:80px" width="520" height="320" viewBox="1400 80 520 320">
<defs>
<linearGradient id="gDirt" x1="1424" y1="0" x2="1838" y2="0" gradientUnits="userSpaceOnUse">
<stop offset="0" stop-color="#775d46"/><stop offset=".18" stop-color="#a08364"/><stop offset=".42" stop-color="#bea487"/><stop offset=".62" stop-color="#b79a7c"/><stop offset=".8" stop-color="#9a7e62"/><stop offset="1" stop-color="#8e7258"/>
</linearGradient>
<linearGradient id="gDirtV" x1="0" y1="210" x2="0" y2="370" gradientUnits="userSpaceOnUse">
<stop offset="0" stop-color="#4a3828" stop-opacity=".55"/><stop offset=".22" stop-color="#4a3828" stop-opacity=".08"/><stop offset="1" stop-color="#c9ad8c" stop-opacity=".25"/>
</linearGradient>
<linearGradient id="gGrass" x1="1424" y1="0" x2="1838" y2="0" gradientUnits="userSpaceOnUse">
<stop offset="0" stop-color="#8d9d54"/><stop offset=".2" stop-color="#9fb066"/><stop offset=".34" stop-color="#b2bb6f"/><stop offset=".45" stop-color="#cfc778"/><stop offset=".56" stop-color="#d5cb7b"/><stop offset=".65" stop-color="#b3bb69"/><stop offset=".8" stop-color="#a7b363"/><stop offset=".9" stop-color="#c5bf6e"/><stop offset="1" stop-color="#d6c878"/>
</linearGradient>
<radialGradient id="gBush" cx=".4" cy=".3" r=".75">
<stop offset="0" stop-color="#aeab5e"/><stop offset=".55" stop-color="#969d54"/><stop offset="1" stop-color="#7a8642"/>
</radialGradient>
<linearGradient id="gVine" x1="0" y1="0" x2="0" y2="1"><stop offset="0" stop-color="#9aa65c"/><stop offset="1" stop-color="#8a9650"/></linearGradient>
<linearGradient id="gGecko" x1="1478" y1="0" x2="1612" y2="0" gradientUnits="userSpaceOnUse">
<stop offset="0" stop-color="#ebe8b8"/><stop offset=".22" stop-color="#dfe0ba"/><stop offset=".42" stop-color="#bccacb"/><stop offset=".6" stop-color="#96abd0"/><stop offset=".72" stop-color="#7f98c9"/><stop offset="1" stop-color="#7b93c6"/>
</linearGradient>
<linearGradient id="gRock" x1="0" y1="0" x2="1" y2="1"><stop offset="0" stop-color="#e4e8e4"/><stop offset=".5" stop-color="#b7bdb8"/><stop offset="1" stop-color="#8e9690"/></linearGradient>
<filter id="bl3" x="-20%" y="-20%" width="140%" height="140%"><feGaussianBlur stdDeviation="2.500"/></filter>
<clipPath id="cGrass"><path d="M1424 210 C1440 206 1470 212 1497 195 C1500 182 1503 175 1510 170 C1520 163 1532 160 1543 158 C1556 156 1570 156 1580 155 C1581 148 1584 144 1590 142.500 C1598 141 1603 146 1603 155 C1606 156 1610 155 1613 157 C1616 159 1617 161 1620 163 L1650 175 L1676 180.500 C1674 173 1678 169 1683 170 C1687 171 1690 174 1692 178 C1692 168 1697 162 1704 162 C1712 162 1717 170 1716 180 L1772 188.500 C1774 184 1779 182 1784 184 C1790 187 1793 192 1796 197 L1810 197 C1811 193 1816 191 1821 193 C1826 195 1828 200 1829 206 L1838 213 L1733 217.500 C1724 219 1716 223 1710 227 C1705 231 1700 233 1694 233.500 C1672 236 1650 237 1630 236.500 C1610 236 1595 230 1580 228.500 C1560 225 1545 223.500 1528 223 C1512 224 1496 232.500 1477 233.500 C1466 232 1458 229 1450 225 C1440 220 1432 215 1424 210Z"/></clipPath>
</defs>
<g stroke-linejoin="round" stroke-linecap="round">
<!-- vine 3 & 4 behind -->
<path d="M1753 308 C1756 325 1757 342 1750 356" fill="none" stroke="#1d1d12" stroke-width="11.500"/>
<path d="M1753 308 C1756 325 1757 342 1750 356" fill="none" stroke="#98a35c" stroke-width="8.500"/>
<path d="M1801.700 258 L1801.700 353.500" fill="none" stroke="#1d1d12" stroke-width="11.200"/>
<path d="M1801.700 258 L1801.700 353.500" fill="none" stroke="#9aa45e" stroke-width="8.400"/>
<!-- right rock -->
<path d="M1791 259.500 L1820.500 230.500 L1821.700 254 L1807.800 264 L1791.700 264.400 Z" fill="#a9afa9" stroke="#1d1d12" stroke-width="1.600"/><path d="M1814 239 L1820 233 L1821 253.500 L1808 263 L1805 259 L1813 251Z" fill="#dfe3df"/>
<!-- left rock -->
<!-- dirt -->
<path id="dirt" d="M1424 210 L1440 232 L1460 260 L1478 287 L1500 303 L1523 321 L1537 325 L1547 328 L1580 343 L1613 357 L1640 368 L1647 370 L1685 342 L1705 323 L1730 303 L1767 315 L1781 302.500 L1777.500 292 L1787 272 L1791 262 L1838 213 Z" fill="url(#gDirt)" stroke="#1d1d12" stroke-width="2"/>
<path d="M1424 210 L1440 232 L1460 260 L1478 287 L1500 303 L1523 321 L1537 325 L1547 328 L1580 343 L1613 357 L1640 368 L1647 370 L1685 342 L1705 323 L1730 303 L1767 315 L1781 302.500 L1777.500 292 L1787 272 L1791 262 L1838 213 Z" fill="url(#gDirtV)"/>
<!-- right darker lobe -->
<path d="M1733 218 L1838 213 L1791 262 L1787 272 L1777.500 292 L1781 302.500 L1767 315 L1730 303 L1712 318 C1722 290 1730 250 1733 218Z" fill="#806650" opacity=".7"/>
<path d="M1745 225 L1800 222 L1772 252 L1760 285 L1740 295 Z" fill="#94785c" opacity=".7"/>
<path d="M1767 268 L1776 262 L1781 268 L1772 290 L1766 282Z" fill="#5e4836" opacity=".8"/>
<!-- left darker band -->
<path d="M1424 210 L1478 287 L1507 332 L1523 321 L1537 325 C1500 290 1470 250 1450 225Z" fill="#5f4935" opacity=".55"/>
<path d="M1508 269 q5 5 7 11" stroke="#5e4634" stroke-width="5.500" fill="none" opacity=".75"/><circle cx="1526" cy="293.500" r="1.900" fill="#5a4331" opacity=".8"/>
<!-- cracks -->
<g stroke="#8a6d52" stroke-width="1.500" fill="none" opacity=".7">
<path d="M1600 262 C1606 290 1618 320 1640 360"/><path d="M1640 262 C1640 290 1642 320 1645 360"/><path d="M1580 290 C1592 310 1606 330 1625 352"/><path d="M1665 250 C1662 280 1655 320 1650 352"/><path d="M1560 300 C1575 318 1590 332 1605 345"/><path d="M1690 260 C1686 290 1676 320 1662 345"/>
</g>
<path d="M1478 288 L1500 304 L1523 322 L1512.500 338 L1503 331 L1485 308 Z" fill="url(#gRock)" stroke="#1d1d12" stroke-width="1.600"/>
<path d="M1480 291 L1500 306 L1519 321 L1511 333 Z" fill="#e9ece9" opacity=".6"/>
<!-- small rocks -->
<path d="M1573.300 273.300 L1580.800 265.800 L1588.300 266.700 L1593 273.300 L1585.800 280.800 L1576.700 280Z" fill="#a7ada8" stroke="#1d1d12" stroke-width="1.700"/><path d="M1581 267 L1588 267.500 L1592 273.300 L1586.500 274 L1578 272Z" fill="#dfe2de"/>
<path d="M1662 312 L1672.500 301 L1685 313 L1675 328 L1663 327Z" fill="url(#gRock)" stroke="#1d1d12" stroke-width="1.600"/>
<circle cx="1656.700" cy="335" r="5.800" fill="#c3c9c5" stroke="#1d1d12" stroke-width="1.500"/>
<!-- bushes -->
<path d="M1436 206 L1470 160 L1500 150 L1530 160 L1560 160 L1575 158 L1500 200 Z" fill="#7d8d47"/>
<g fill="url(#gBush)" stroke="#1d1d12" stroke-width="2">
<circle cx="1556.500" cy="147" r="18.500"/>
<circle cx="1519" cy="137" r="27"/>
<ellipse cx="1467.500" cy="150.500" rx="33.500" ry="34.500"/>
<ellipse cx="1452" cy="196" rx="29.500" ry="25"/>
</g>
<g stroke="#6b7838" stroke-width="2.100" fill="none" opacity=".9">
<path d="M1445 135 q4 -6 10 -9 M1452 145 q5 -7 12 -10 M1462 128 q6 -3 12 -2 M1470 142 q5 2 8 6 M1478 130 q4 3 6 8 M1470 158 q6 1 10 5 M1455 160 q5 -2 10 0 M1482 150 q3 4 4 9 M1486 166 q2 4 2 8"/>
<path d="M1505 122 l3 6 M1512 117 l2 7 M1520 132 l1 8 M1527 130 l0 8 M1534 128 l-1 8 M1514 140 l2 8 M1524 146 l1 9 M1532 146 l-1 9 M1540 140 l-2 8 M1505 140 l3 7"/>
<path d="M1550 140 l0 7 M1557 138 l0 7 M1564 142 l-1 7 M1553 153 l0 6 M1561 154 l0 5"/>
<path d="M1440 150 q3 -5 8 -8 M1448 170 q5 -3 11 -3 M1476 172 q5 2 8 6 M1492 140 q3 4 4 9 M1461 123 q6 -1.500 12 0.500 M1438 164 q2 -4 6 -7 M1510 152 l2 8 M1520 158 l1 7 M1536 156 l-1 7 M1498 128 l3 6 M1528 116 l1 7 M1542 126 l-1 7"/>
<path d="M1432 192 q4 -5 10 -6 M1440 203 q6 -5 13 -5 M1452 186 q5 -1 9 1 M1460 198 q5 1 8 4 M1447 212 q6 -2 12 0 M1468 188 q3 3 4 7 M1472 205 q1 4 0 8"/>
</g>
<path d="M1693.500 222 C1698 258 1708 295 1718 318 C1724 332 1730 342 1736 350" fill="none" stroke="#1d1d12" stroke-width="12"/>
<path d="M1693.500 222 C1698 258 1708 295 1718 318 C1724 332 1730 342 1736 350" fill="none" stroke="#9ba65f" stroke-width="9"/>
<!-- grass -->
<path id="grass" d="M1424 210 C1440 206 1470 212 1497 195 C1500 182 1503 175 1510 170 C1520 163 1532 160 1543 158 C1556 156 1570 156 1580 155 C1581 148 1584 144 1590 142.500 C1598 141 1603 146 1603 155 C1606 156 1610 155 1613 157 C1616 159 1617 161 1620 163 L1650 175 L1676 180.500 C1674 173 1678 169 1683 170 C1687 171 1690 174 1692 178 C1692 168 1697 162 1704 162 C1712 162 1717 170 1716 180 L1772 188.500 C1774 184 1779 182 1784 184 C1790 187 1793 192 1796 197 L1810 197 C1811 193 1816 191 1821 193 C1826 195 1828 200 1829 206 L1838 213 L1733 217.500 C1724 219 1716 223 1710 227 C1705 231 1700 233 1694 233.500 C1672 236 1650 237 1630 236.500 C1610 236 1595 230 1580 228.500 C1560 225 1545 223.500 1528 223 C1512 224 1496 232.500 1477 233.500 C1466 232 1458 229 1450 225 C1440 220 1432 215 1424 210Z" fill="url(#gGrass)" stroke="#1d1d12" stroke-width="1.800"/>
<!-- leaves lighter -->
<g fill="#aab465" stroke="#1d1d12" stroke-width="1.600">
<path d="M1676.500 180.500 C1673 172 1679 167 1684 170 C1688 172 1690 175 1692 179 C1691 168 1697 161.500 1704.500 162 C1712 162.500 1717 170 1716 180.500 C1706 186 1686 186 1676.500 180.500Z"/>
<path d="M1580 156 C1581 148 1584 144 1590 142.500 C1598 141 1603 146 1603 155.500 C1597 160 1586 160 1580 156Z" fill="#b4bb6e"/>
<path d="M1772 188.500 C1774 184 1779 182 1784 184 C1790 187 1793 192 1796 197 C1788 199 1778 196 1772 188.500Z" fill="#b9b867"/>
<path d="M1810 197 C1811 193 1816 191 1821 193 C1826 195 1828 200 1829 206 C1822 207 1815 203 1810 197Z" fill="#c6bd6c"/>
</g>
<path d="M1678 182.500 C1690 187 1706 186.500 1715 182.500" stroke="#aab465" stroke-width="3" fill="none"/>
<path d="M1582 157.500 C1588 160 1596 160 1601.500 157.500" stroke="#b0b86b" stroke-width="3" fill="none"/>
<path d="M1774 191 C1780 196 1788 198.500 1794 198.500" stroke="#b5b565" stroke-width="2.500" fill="none"/>
<path d="M1812 199 C1817 204 1822 206 1827 207" stroke="#c3ba6a" stroke-width="2.500" fill="none"/>
<!-- hump highlight -->
<path d="M1499 196 C1502 182 1506 174 1514 169 C1528 161 1552 158 1578 157.500 C1600 160 1618 166 1640 176 C1620 186 1580 200 1545 203 C1525 204 1508 202 1499 196Z" fill="#b1bf78" opacity=".6" filter="url(#bl3)" clip-path="url(#cGrass)"/>
<path d="M1499.500 194 C1502 182 1506 175 1513 170.500" stroke="#b7c47c" stroke-width="1.600" fill="none" opacity=".8"/>
<g stroke="#6f7d3b" stroke-width="1.600" opacity=".75"><path d="M1540.500 167 l0 5M1637 186 l0 4M1580 206 l-1 5M1574 207 l-1 4M1500 207 l1 4M1506 208 l1 4"/></g>
<!-- grass shading -->
<ellipse cx="1542" cy="180" rx="26" ry="9" fill="#869649" opacity=".45"/>
<ellipse cx="1573" cy="167" rx="18" ry="5" fill="#b9c17a" opacity=".5"/>
<ellipse cx="1717" cy="194" rx="19" ry="6.500" fill="#869246" opacity=".5"/>
<ellipse cx="1688" cy="206" rx="11.500" ry="5.500" fill="#c3c684" opacity=".75"/>
<ellipse cx="1673" cy="216" rx="8" ry="4" fill="#c3c684" opacity=".7"/>
<ellipse cx="1615" cy="208" rx="22" ry="5" fill="#b9b25f" opacity=".5"/>
<path d="M1426 211 C1445 224 1460 231 1477 231.500 C1495 230.500 1511 222.500 1528 221 C1560 222 1600 231 1630 233.500" stroke="#c1c983" stroke-width="2.200" fill="none" opacity=".8"/>
<path d="M1440 213 C1470 219 1500 214 1520 205 C1560 214 1600 222 1640 226 C1670 229 1695 228 1712 220" stroke="#7d8c45" stroke-width="5" fill="none" opacity=".25"/>
<!-- vines front -->
<path d="M1551 262 C1549.500 290 1547 310 1539 328 C1534 338 1527 340 1520 333" fill="none" stroke="#1d1d12" stroke-width="9.600"/>
<path d="M1551 262 C1549.500 290 1547 310 1539 328 C1534 338 1527 340 1520 333" fill="none" stroke="#98ad5f" stroke-width="6.600"/>
<!-- gecko -->
<g stroke="#151510" stroke-linecap="round" stroke-linejoin="round" fill="none">
<path d="M1536.700 241 L1533.200 232.500 L1538.800 225" stroke-width="9.600"/><path d="M1533.200 232.500 L1531.800 234" stroke-width="9.600"/>
<path d="M1536.700 241 L1533.200 232.500 L1538.800 225" stroke="#e4e3b9" stroke-width="5.400"/><path d="M1533.200 232.500 L1531.800 234" stroke="#e4e3b9" stroke-width="5.400"/>
<path d="M1560.300 237 L1558.400 225" stroke-width="9.600"/><path d="M1560.300 237 L1558.400 225" stroke="#e3e4c0" stroke-width="5.400"/>
<path d="M1535.500 261 L1533.200 268.300 L1541.800 272.600" stroke-width="9.600"/><path d="M1533.200 268.300 L1531.500 267" stroke-width="9.600"/>
<path d="M1535.500 261 L1533.200 268.300 L1541.800 272.600" stroke="#e6e4b8" stroke-width="5.400"/><path d="M1533.200 268.300 L1531.500 267" stroke="#e6e4b8" stroke-width="5.400"/>
<path d="M1562.300 258 L1564 271" stroke-width="9.600"/><path d="M1562.300 258 L1564 271" stroke="#e0e2c2" stroke-width="5.400"/>
</g>
<path d="M1487 250 C1495 247.500 1499 246.500 1503.500 245.800 C1512 244 1520 242.500 1528.500 240.800 C1540 239 1553 237 1565.800 234.200 C1569 232 1571 229.500 1574 227.500 C1578 225 1582 224.500 1586.700 224.600 C1593 224.500 1599 226 1603.300 229.200 C1608 232.500 1612 237 1612.500 242.500 C1613 248 1611 253 1607.500 256.700 C1603 261 1597 262.800 1590.800 262.500 C1583 262.500 1576 260 1570 257.500 C1560 258.500 1550 260 1540.800 261.700 C1530 263.500 1521 264.500 1511.700 265.800 C1505 267 1497 269.500 1490.800 270 C1486 270.500 1482 269 1480.800 265.800 C1478 262 1477.500 258 1479 255 C1481 252 1484 251 1487 250Z" fill="url(#gGecko)" stroke="#151510" stroke-width="2.700" stroke-linejoin="round"/>
<path d="M1521 251.600 C1535 250.500 1548 249.500 1561 248.200" stroke="#e6e2a8" stroke-width="2.800" fill="none" opacity=".85" stroke-linecap="round"/>
<path d="M1540 246 C1550 245 1560 243 1568 241" stroke="#a8b8d8" stroke-width="2" fill="none" opacity=".6" stroke-linecap="round"/>
<circle cx="1586.700" cy="233.300" r="6.800" fill="#fff"/><circle cx="1590" cy="254.200" r="6.800" fill="#fff"/>
<path d="M1583.700 227.200 A3.200 3.200 0 0 0 1589.800 227.400 A6.800 6.800 0 0 0 1583.700 227.200Z" fill="#151510"/>
<ellipse cx="1591.800" cy="258.600" rx="3.200" ry="2.200" fill="#151510" transform="rotate(15 1591.800 258.600)"/>
<!-- fly -->
<ellipse cx="1842" cy="203.500" rx="6" ry="10" fill="#f4f4f4" stroke="#1d1d12" stroke-width="1.500" transform="rotate(-8 1842 203)"/>
<ellipse cx="1854" cy="219" rx="9.500" ry="6" fill="#f4f4f4" stroke="#1d1d12" stroke-width="1.500" transform="rotate(20 1854 219)"/>
<ellipse cx="1849" cy="211" rx="4.500" ry="4" fill="#e4e4e4" stroke="#1d1d12" stroke-width="1.200"/>
<circle cx="1842" cy="217" r="3.300" fill="#1d1d12"/>
</g>
</svg>

<div id="money"><span>$40</span></div>
<div class="gb" style="left:1535px"><svg width="46" height="46" viewBox="0 0 46 46">
<path d="M16 9 h14 v4 h-14z" fill="#8a6a4c"/><path d="M14 14 q0 -1.500 2 -1.500 h14 q2 0 2 1.500 l1.500 4 v15 q0 3 -3 3 h-15 q-3 0 -3 -3 v-15z" fill="#fbf6ea" stroke="#7a5636" stroke-width="1.600"/>
<path d="M12.500 28 q6 -3 10.500 0 t10.500 -1 v6 q0 3 -3 3 h-15 q-3 0 -3 -3z" fill="#8a6a4c"/><path d="M22 20 l1.500 -2 l1 2 l2 .5 l-2 1 l0 2 l-1.500 -1.500 l-2 .5z" fill="#7a5636"/><circle cx="19" cy="27" r="2" fill="#c8b79a"/><circle cx="29" cy="26" r="1.700" fill="#c8b79a"/>
</svg></div>
<div class="gb" style="left:1591.300px"><svg width="46" height="46" viewBox="0 0 46 46">
<circle cx="22" cy="24" r="14" fill="#8f6f52" stroke="#6f4f34" stroke-width="1.500"/><circle cx="22" cy="24" r="11.500" fill="none" stroke="#a88a6a" stroke-width="1"/>
<text x="22" y="32" font-family="Liberation Sans, sans-serif" font-size="22" fill="#5a3d26" text-anchor="middle">$</text>
<path d="M34 9 l3 -3 M37 12 l3 -2" stroke="#7a5636" stroke-width="1.300"/>
</svg></div>
<div class="gb" style="left:1647.300px"><svg width="46" height="46" viewBox="0 0 46 46">
<rect x="9" y="8" width="28" height="30" rx="2" fill="#a98f76" stroke="#7a5636" stroke-width="1.600"/>
<path d="M6 12h5M6 17h5M6 22h5M6 27h5M6 32h5" stroke="#7a5636" stroke-width="1.600"/>
<ellipse cx="18.500" cy="25" rx="4.500" ry="6" fill="#ece3d0" transform="rotate(20 18.500 25)"/><ellipse cx="28.500" cy="25" rx="4.500" ry="6" fill="#ece3d0" transform="rotate(-20 28.500 25)"/>
<ellipse cx="23.500" cy="21" rx="3" ry="4" fill="#7a4f30"/><path d="M20 16 l2 2 M27 16 l-2 2" stroke="#7a4f30" stroke-width="1"/>
</svg></div>
<div class="gb" style="left:1703px"><svg width="46" height="46" viewBox="0 0 46 46">
<g transform="translate(23.500 23)"><g fill="#8e765f" stroke="#6f5338" stroke-width="1">
<rect x="-3.500" y="-18" width="7" height="36" rx="1.500"/><rect x="-3.500" y="-18" width="7" height="36" rx="1.500" transform="rotate(45)"/><rect x="-3.500" y="-18" width="7" height="36" rx="1.500" transform="rotate(90)"/><rect x="-3.500" y="-18" width="7" height="36" rx="1.500" transform="rotate(135)"/></g>
<circle r="13" fill="#8e765f"/><circle r="13" fill="none" stroke="#6f5338" stroke-width="0"/><circle r="7.500" fill="#f1ebdc" stroke="#6f5338" stroke-width="1.200"/></g>
</svg></div>

<div id="vsb"><div class="hcorner"></div><div class="th"></div><div class="ab" style="top:710px"></div><div class="ab" style="top:727px"></div><svg class="i" style="left:3px;top:716px" width="8" height="5" viewBox="0 0 8 5"><path d="M0 5L4 0L8 5z" fill="#9aa0a6"/></svg><svg class="i" style="left:3px;top:734px" width="8" height="5" viewBox="0 0 8 5"><path d="M0 0L4 5L8 0z" fill="#9aa0a6"/></svg></div>
<div id="hsb"><div class="th"></div><div class="vb" style="left:1872px"></div><div class="vb" style="left:1890px"></div><svg class="i" style="left:1878px;top:3.500px" width="5" height="8" viewBox="0 0 5 8"><path d="M5 0L0 4L5 8z" fill="#80868b"/></svg><svg class="i" style="left:1897px;top:3.500px" width="5" height="8" viewBox="0 0 5 8"><path d="M0 0L5 4L0 8z" fill="#80868b"/></svg></div>
<div id="botbar"><div class="tab"><span class="t" style="left:-3px;top:12px;font-size:16px;color:#0b57d0;-webkit-text-stroke:.4px #0b57d0">1</span><svg class="i" style="left:16px;top:18px" width="10" height="6" viewBox="0 0 10 6"><path d="M0 0L5 6L10 0z" fill="#0b57d0"/></svg></div><svg class="i" style="left:1879px;top:12px" width="20" height="20" viewBox="0 0 24 24"><path d="M15.410 7.410L14 6l-6 6 6 6 1.410-1.410L10.830 12z" fill="#444746"/></svg></div>
<div id="taskbar"><div class="lstrip"></div><div class="rline"></div>
<div class="ul" style="left:13.0px"></div>
<div class="ul" style="left:67.3px"></div>
<div class="ul" style="left:121.6px"></div>
<div class="ul" style="left:175.9px"></div>
<div class="ul" style="left:230.2px"></div>
<div class="ul" style="left:284.5px"></div>
<div class="ul" style="left:338.8px"></div>
<div class="ul" style="left:393.1px"></div>
<div class="ul" style="left:447.4px"></div>
<svg class="i" style="left:21px;top:8.3px" width="28" height="28" viewBox="-14 -14 28 28"><circle r="12.600" fill="#8f43b4"/><circle r="10" fill="#fff"/><g transform="translate(-10.400 -10.400) scale(1.300)"><path fill="#7a2f9f" d="M8 0C3.580 0 0 3.580 0 8c0 3.540 2.290 6.530 5.470 7.590.4.070.55-.17.55-.38 0-.19-.01-.82-.01-1.490-2.010.37-2.530-.49-2.690-.94-.09-.23-.48-.94-.82-1.130-.28-.15-.68-.52-.01-.53.63-.01 1.080.58 1.230.82.72 1.210 1.870.87 2.330.66.070-.52.28-.87.51-1.070-1.780-.2-3.640-.89-3.640-3.950 0-.87.31-1.590.82-2.150-.08-.2-.36-1.020.08-2.120 0 0 .67-.21 2.200.82.640-.18 1.320-.27 2-.27.680 0 1.360.09 2 .27 1.530-1.040 2.200-.82 2.200-.82.440 1.100.160 1.920.080 2.120.510.560.820 1.270.820 2.150 0 3.070-1.870 3.750-3.650 3.950.290.250.540.730.540 1.480 0 1.070-.01 1.930-.01 2.200 0 .210.150.460.550.380A8.013 8.013 0 0016 8c0-4.420-3.580-8-8-8z"/></g></svg>
<svg class="i" style="left:75px;top:8.3px" width="28" height="28" viewBox="-14 -14 28 28"><circle r="12.500" fill="#1ed760"/><path d="M-7.500 -4 C-2 -5.800 4 -5.200 8 -2.800" stroke="#1a1a14" stroke-width="2.600" fill="none" stroke-linecap="round"/><path d="M-6.500 0.300 C-2 -1 3.500 -0.500 6.800 1.500" stroke="#1a1a14" stroke-width="2.200" fill="none" stroke-linecap="round"/><path d="M-5.500 4.300 C-2 3.300 2.500 3.600 5.300 5.400" stroke="#1a1a14" stroke-width="1.800" fill="none" stroke-linecap="round"/></svg>
<svg class="i" style="left:129px;top:8.3px" width="28" height="28" viewBox="-14 -14 28 28"><circle cx="-0.500" cy="-1" r="12.500" fill="#5865f2"/><path d="M-8 4 C-8.500 -1 -7 -5 -5 -7 C-3.500 -7.800 -2.500 -8 -1.500 -8 L-1 -7 C0 -7.200 0.500 -7.200 1.500 -7 L2 -8 C3 -8 4 -7.800 5.500 -7 C7.500 -5 9 -1 8.500 4 C7 5.500 5.500 6 4 6.300 L3 4.800 C-0.500 5.500 -1 5.500 -3 4.800 L-4 6.300 C-5.500 6 -7 5.500 -8 4Z" fill="#fff"/><ellipse cx="-3" cy="0" rx="1.700" ry="2" fill="#5865f2"/><ellipse cx="3" cy="0" rx="1.700" ry="2" fill="#5865f2"/><circle cx="6.500" cy="6" r="7" fill="#e8363c"/><text x="6.500" y="9.500" font-family="Liberation Sans, sans-serif" font-weight="bold" font-size="9.500" fill="#fff" text-anchor="middle" textLength="12" lengthAdjust="spacingAndGlyphs">9+</text></svg>
<svg class="i" style="left:183px;top:8.3px" width="28" height="28" viewBox="-14 -14 28 28"><path d="M0 -12 L10.500 -6 L10.500 6 L0 12 L-10.500 6 L-10.500 -6Z" fill="#d8d8d8"/><path d="M0 -12 L10.500 -6 L0 0 L-10.500 -6Z" fill="#f4f4f4"/><path d="M0 0 L10.500 -6 L10.500 6 L0 12Z" fill="#bdbdbd"/><path d="M0 -6.500 L0 0 M0 0 L-5.500 3.200 M0 0 L5.500 3.200" stroke="#222" stroke-width="2.200" fill="none"/><path d="M-2.500 -5 L0 -6.500 L2.500 -5 M-5.500 0.500 L-5.500 3.200 L-3 4.700 M5.500 0.500 L5.500 3.200 L3 4.700" stroke="#222" stroke-width="1.500" fill="none"/></svg>
<svg class="i" style="left:237px;top:8.3px" width="28" height="28" viewBox="-14 -14 28 28"><g transform="translate(-1.500,-1)"><path d="M0 -12 L10.500 -6 L10.500 6 L0 12 L-10.500 6 L-10.500 -6Z" fill="#8c99a8"/><path d="M0 -12 L10.500 -6 L0 0 L-10.500 -6Z" fill="#aab5c2"/><path d="M0 0 L10.500 -6 L10.500 6 L0 12Z" fill="#6f7c8c"/><path d="M0 -6.500 L0 0 M0 0 L-5.500 3.200 M0 0 L5.500 3.200" stroke="#222" stroke-width="2.200" fill="none"/><path d="M-2.500 -5 L0 -6.500 L2.500 -5 M-5.500 0.500 L-5.500 3.200 L-3 4.700 M5.500 0.500 L5.500 3.200 L3 4.700" stroke="#222" stroke-width="1.500" fill="none"/></g><text x="8" y="11" font-family="Liberation Sans, sans-serif" font-weight="bold" font-style="italic" font-size="14" fill="#e8e8e8" stroke="#555" stroke-width=".6" text-anchor="middle">6</text></svg>
<svg class="i" style="left:293px;top:8.3px" width="28" height="28" viewBox="-14 -14 28 28"><g transform="scale(1.130)"><path d="M-12 -5 L-9 -7 L5 6.500 L5 -6.500 L-9 7 L-12 5 L-2 0Z" fill="#9b6fe0"/><path d="M4 -12 L11.500 -8.500 L11.500 8.500 L4 12 L2.500 7 L7 4 L7 -4 L2.500 -7Z" fill="#b794f6"/><path d="M4 -12 L-9 7 L-12 5 L2 -9Z" fill="#a884ee"/></g></svg>
<svg class="i" style="left:347px;top:8.3px" width="28" height="28" viewBox="-14 -14 28 28"><circle r="12.500" fill="#14396a"/><circle r="12.500" fill="#1b5a98" opacity=".55"/><circle cx="4.500" cy="-3.500" r="4.300" fill="none" stroke="#fff" stroke-width="1.800"/><circle cx="4.500" cy="-3.500" r="2" fill="#fff"/><path d="M-12 1 L-4 4.500 L1.500 0 L4 2.500 L-2 7.500 L-3 10 L-10 7Z" fill="#fff"/><circle cx="-3.800" cy="6.200" r="3.200" fill="#fff"/><circle cx="-3.800" cy="6.200" r="1.800" fill="#14396a"/></svg>
<svg class="i" style="left:401px;top:8.3px" width="28" height="28" viewBox="-14 -14 28 28"><circle r="12.300" fill="#26252b" stroke="#c8c8c8" stroke-width="1.500"/><g fill="none" stroke="#d8d8d8" stroke-width="2"><path d="M-1 -8.500 C4 -8 6 -3 3 0.500"/><path d="M8 3 C5 8 0 8 -2.500 4"/><path d="M-7.500 5 C-10 0 -6 -4 -1.500 -3.500"/></g></svg>
<svg class="i" style="left:455px;top:8.3px" width="28" height="28" viewBox="-14 -14 28 28"><path d="M-9.500 8 C-11 2 -8 -4 -3 -7 C0 -10.500 3 -12.500 5.500 -10.500 C7 -9 6 -7 7.500 -4 C10 1 9.500 7 6 10 C2 12.500 -7 12.500 -9.500 8Z" fill="#a9c76a" stroke="#23230f" stroke-width="1.800"/><circle cx="4" cy="1" r="3.600" fill="#fff"/><circle cx="5" cy="1.200" r="1.900" fill="#111"/></svg>
<svg class="i" style="left:1679px;top:16px" width="16" height="12" viewBox="0 0 16 12"><path d="M1.500 9.500L8 3l6.500 6.500" stroke="#f2f2f2" stroke-width="1.500" fill="none"/></svg>
<svg class="i" style="left:1706px;top:12px" width="20" height="20" viewBox="0 0 20 20"><g fill="none" stroke="#f2f2f2" stroke-width="1.400"><path d="M3 18 C3 10 9 4.500 17 4.500" opacity=".95"/><path d="M6.500 18 C6.500 12 11 8 17 8"/><path d="M10 18 C10 14 13 11.500 17 11.500"/></g><circle cx="15.300" cy="16.300" r="1.800" fill="#f2f2f2"/></svg>
<svg class="i" style="left:1731px;top:12px" width="22" height="20" viewBox="0 0 22 20"><path d="M2 7.500h3.200L9 4v12L5.200 12.500H2z" fill="none" stroke="#f2f2f2" stroke-width="1.300" stroke-linejoin="round"/><g fill="none" stroke="#f2f2f2" stroke-width="1.200"><path d="M11.500 7.500c1 1.200 1 3.800 0 5"/><path d="M14 5.500c2 2.300 2 6.700 0 9" opacity=".8"/><path d="M16.500 3.500c3 3.500 3 9.500 0 13" opacity=".45"/></g></svg>
<svg class="i" style="left:1758px;top:14px" width="28" height="16" viewBox="0 0 28 16"><rect x="1" y="1" width="26" height="13.500" rx="1" fill="none" stroke="#f2f2f2" stroke-width="1.300"/><g stroke="#f2f2f2" stroke-width="1.300" stroke-dasharray="1.600 1.500"><path d="M4 4.700h20"/><path d="M4 7.700h20"/></g><path d="M6 11h16" stroke="#f2f2f2" stroke-width="1.300"/></svg>
<span class="t" style="left:1802px;top:4.500px;font-size:14.5px;color:#f2f2f2;letter-spacing:-0.75px">3:33 PM</span>
<span class="t" style="left:1796.500px;top:24.500px;font-size:14.5px;color:#f2f2f2;letter-spacing:-0.65px">9/23/2025</span>
<svg class="i" style="left:1873px;top:12px" width="20" height="20" viewBox="0 0 20 20"><path d="M1.500 2.500h17v12h-6l-2.500 3-2.500-3h-6z" fill="none" stroke="#f2f2f2" stroke-width="1.300"/></svg>
</div>
</div>
</body></html>
